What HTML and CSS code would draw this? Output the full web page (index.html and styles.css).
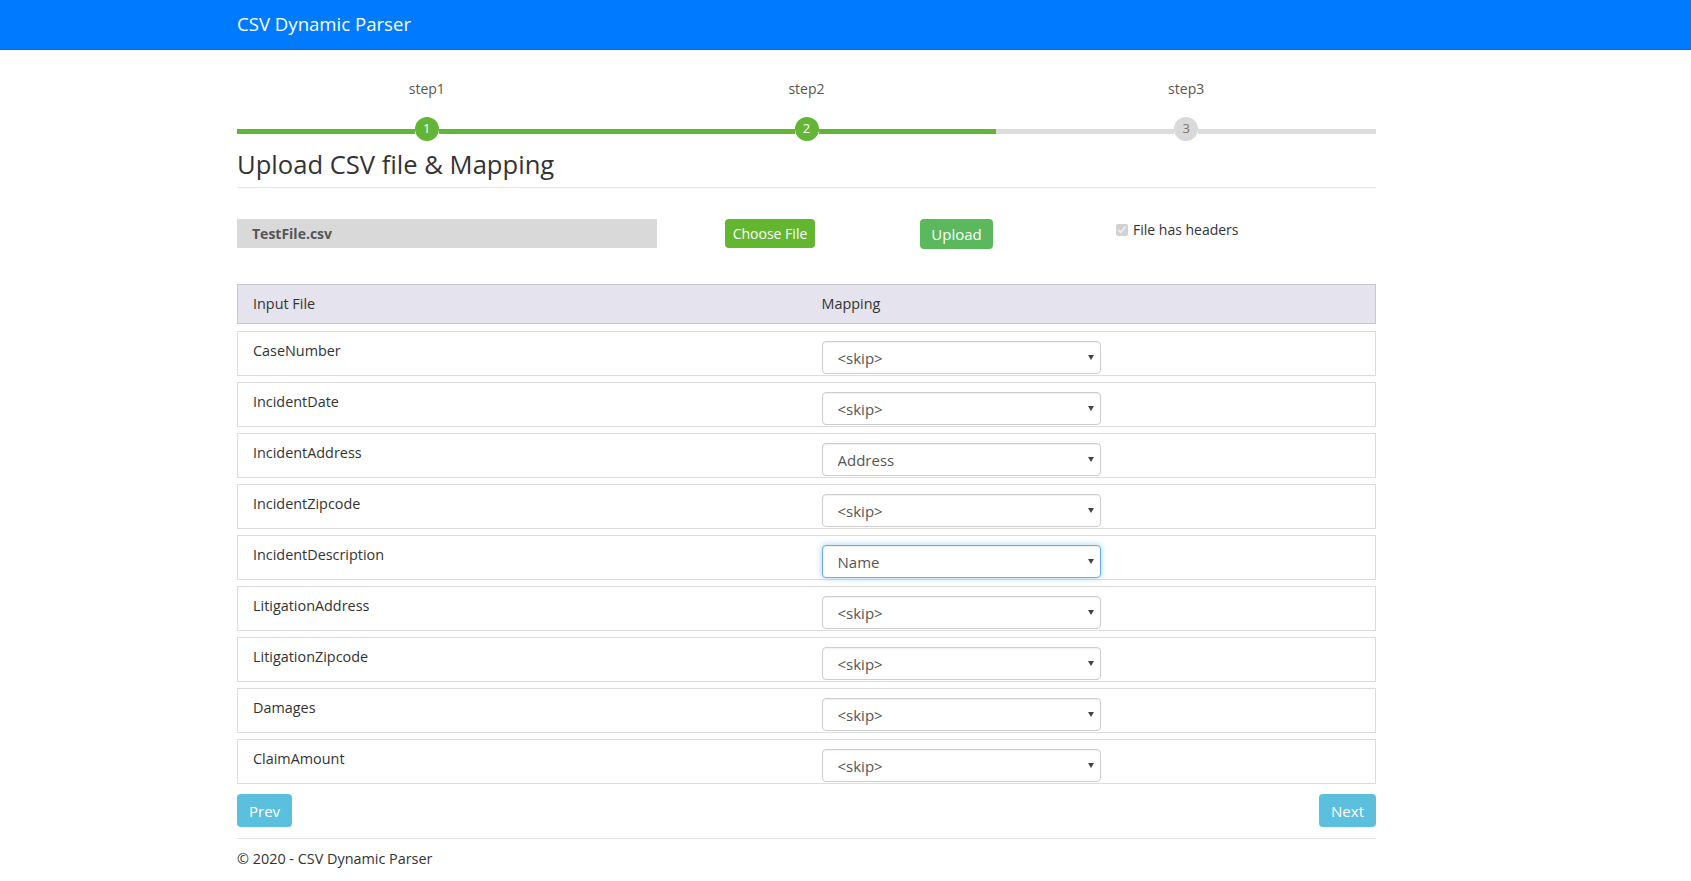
FILE: index.html
```html
<!DOCTYPE html>
<html lang="en">
<head>
<meta charset="utf-8">
<title>CSV Dynamic Parser</title>
<link rel="stylesheet" href="styles.css">
</head>
<body>
<header class="navbar">
  <div class="nav-inner"><span class="brand">CSV Dynamic Parser</span></div>
</header>
<main class="container">
  <div class="steps">
    <div class="step done">
      <div class="step-label">step1</div>
      <div class="track"><span class="seg"></span><span class="dot">1</span><span class="seg"></span></div>
    </div>
    <div class="step done">
      <div class="step-label">step2</div>
      <div class="track"><span class="seg"></span><span class="dot">2</span><span class="seg"></span></div>
    </div>
    <div class="step todo">
      <div class="step-label">step3</div>
      <div class="track"><span class="seg"></span><span class="dot">3</span><span class="seg"></span></div>
    </div>
  </div>

  <h1 class="page-title">Upload CSV file &amp; Mapping</h1>

  <div class="upload-row">
    <div class="filebox">TestFile.csv</div>
    <div><button class="btn btn-choose">Choose File</button></div>
    <div><button class="btn btn-upload">Upload</button></div>
    <label class="headers-check"><input type="checkbox" checked disabled> File has headers</label>
  </div>

  <div class="map-table">
    <div class="map-head">
      <div class="cell">Input File</div>
      <div class="cell">Mapping</div>
    </div>
    <div class="map-rows">
      <div class="map-row"><div class="cell">CaseNumber</div><div class="cell"><div class="sel"><select><option>&lt;skip&gt;</option></select></div></div></div>
      <div class="map-row"><div class="cell">IncidentDate</div><div class="cell"><div class="sel"><select><option>&lt;skip&gt;</option></select></div></div></div>
      <div class="map-row"><div class="cell">IncidentAddress</div><div class="cell"><div class="sel"><select><option>Address</option></select></div></div></div>
      <div class="map-row"><div class="cell">IncidentZipcode</div><div class="cell"><div class="sel"><select><option>&lt;skip&gt;</option></select></div></div></div>
      <div class="map-row"><div class="cell">IncidentDescription</div><div class="cell"><div class="sel focused"><select><option>Name</option></select></div></div></div>
      <div class="map-row"><div class="cell">LitigationAddress</div><div class="cell"><div class="sel"><select><option>&lt;skip&gt;</option></select></div></div></div>
      <div class="map-row"><div class="cell">LitigationZipcode</div><div class="cell"><div class="sel"><select><option>&lt;skip&gt;</option></select></div></div></div>
      <div class="map-row"><div class="cell">Damages</div><div class="cell"><div class="sel"><select><option>&lt;skip&gt;</option></select></div></div></div>
      <div class="map-row"><div class="cell">ClaimAmount</div><div class="cell"><div class="sel"><select><option>&lt;skip&gt;</option></select></div></div></div>
    </div>
  </div>

  <div class="nav-buttons">
    <button class="btn btn-info">Prev</button>
    <button class="btn btn-info">Next</button>
  </div>

  <footer class="footer">© 2020 - CSV Dynamic Parser</footer>
</main>
</body>
</html>
```
FILE: styles.css
```css
* { box-sizing: border-box; }
html, body { margin: 0; padding: 0; }
body {
  font-family: "Open Sans", "Noto Sans", "Liberation Sans", sans-serif;
  font-size: 14px;
  line-height: 20px;
  color: #333;
  background: #fff;
}
.navbar {
  height: 50px;
  background: #007bff;
  border-bottom: 1px solid #0069d9;
}
.nav-inner {
  margin-left: 237px;
  height: 49px;
  display: flex;
  align-items: center;
}
.brand {
  color: #fff;
  font-size: 18.6px;
  line-height: 24px;
  margin-top: -2px;
}
.container {
  margin-left: 237px;
  width: 1139px;
}
.steps {
  display: grid;
  grid-template-columns: repeat(3, 1fr);
  margin-top: 29px;
}
.step { display: flex; flex-direction: column; }
.step-label {
  text-align: center;
  color: #555;
  font-size: 14px;
  line-height: 20px;
  height: 20px;
}
.track {
  display: flex;
  align-items: flex-start;
  height: 24px;
  margin-top: 18px;
}
.seg {
  flex: 1;
  height: 5px;
  margin-top: 12px;
  background: #63b536;
}
.dot {
  width: 24px;
  height: 24px;
  border-radius: 50%;
  background: #63b536;
  color: #fff;
  font-size: 13px;
  line-height: 23px;
  text-align: center;
  flex: none;
}
.todo .seg { background: #dcdcdc; }
.todo .dot { background: #d9d9d9; color: #777; }

.page-title {
  margin: 9px 0 0;
  font-size: 25.6px;
  line-height: 29px;
  font-weight: 400;
  color: #333;
  padding-bottom: 8px;
  border-bottom: 1px solid #e6e6e6;
}

.upload-row {
  display: grid;
  grid-template-columns: 488px 195px 200px 1fr;
  align-items: start;
  margin-top: 31px;
}
.filebox {
  width: 420px;
  height: 29px;
  background: #d9d9d9;
  color: #555;
  font-weight: 700;
  font-size: 14px;
  line-height: 29px;
  padding-left: 15px;
}
.btn {
  font-family: inherit;
  border: none;
  border-radius: 4px;
  color: #fff;
  font-size: 14px;
  line-height: 20px;
  padding: 5px 6px;
  cursor: pointer;
}
.btn-choose { background: #62b630; height: 29px; padding: 4px 6px; width: 90px; }
.btn-upload { background: #5cb85c; height: 30px; width: 73px; padding: 5px 10px; font-size: 15px; }
.headers-check {
  display: flex;
  align-items: center;
  gap: 1px;
  font-size: 14px;
  color: #333;
  margin-top: 1px;
  margin-left: -4px;
}
.headers-check input {
  width: 12px;
  height: 12px;
  margin: 0 4px 0 0;
}

.map-table { margin-top: 35px; }
.map-head {
  display: grid;
  grid-template-columns: 1fr 1fr;
  height: 40px;
  background: #e4e3ee;
  border: 1px solid #c6c6ce;
  align-items: center;
  margin-bottom: 7px;
}
.map-head .cell { padding: 0 15px; line-height: 20px; font-size: 14.4px; }
.map-rows { display: flex; flex-direction: column; gap: 6px; }
.map-row {
  display: grid;
  grid-template-columns: 1fr 1fr;
  border: 1px solid #dcdcdc;
  padding: 9px 0 1px;
  font-size: 14.4px;
}
.map-row .cell { padding: 0 15px; }
.sel {
  position: relative;
  width: 279px;
  height: 33px;
}
.sel select {
  appearance: none;
  -webkit-appearance: none;
  width: 100%;
  height: 33px;
  border: 1px solid #ccc;
  border-radius: 4px;
  background: #fff;
  color: #555;
  font-family: inherit;
  font-size: 15px;
  padding: 0 20px 0 15px;
  box-shadow: inset 0 1px 1px rgba(0,0,0,0.06);
}
.sel::after {
  content: "";
  position: absolute;
  right: 7px;
  top: 14px;
  border-left: 3px solid transparent;
  border-right: 3px solid transparent;
  border-top: 5px solid #444;
  pointer-events: none;
}
.sel.focused select {
  border-color: #66afe9;
  box-shadow: inset 0 1px 1px rgba(0,0,0,.075), 0 0 6px rgba(102,175,233,.6);
}

.nav-buttons {
  display: flex;
  justify-content: space-between;
  margin-top: 10px;
}
.btn-info {
  background: #5bc0de;
  height: 33px;
  padding: 6px 12px;
  font-size: 15px;
}
.footer {
  margin-top: 11px;
  border-top: 1px solid #e6e6e6;
  padding-top: 10px;
  font-size: 14.4px;
  line-height: 20px;
  color: #333;
}
```
